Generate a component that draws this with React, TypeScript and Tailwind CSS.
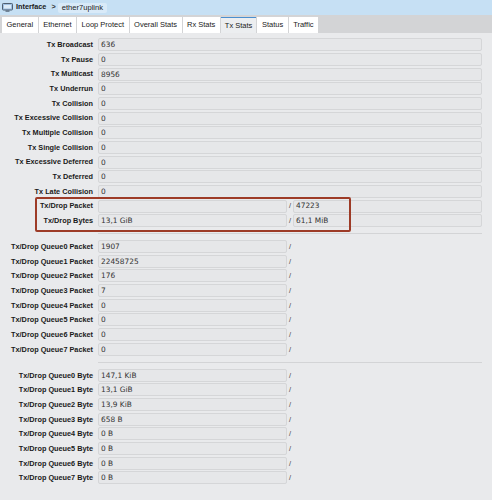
import React from "react";

type RowProps = {
  label: string;
  value?: string;
  second?: string;
  split?: boolean;
};

const tabs = [
  "General",
  "Ethernet",
  "Loop Protect",
  "Overall Stats",
  "Rx Stats",
  "Tx Stats",
  "Status",
  "Traffic",
];

const main: [string, string][] = [
  ["Tx Broadcast", "636"],
  ["Tx Pause", "0"],
  ["Tx Multicast", "8956"],
  ["Tx Underrun", "0"],
  ["Tx Collision", "0"],
  ["Tx Excessive Collision", "0"],
  ["Tx Multiple Collision", "0"],
  ["Tx Single Collision", "0"],
  ["Tx Excessive Deferred", "0"],
  ["Tx Deferred", "0"],
  ["Tx Late Collision", "0"],
];

const queuePackets = ["1907", "22458725", "176", "7", "0", "0", "0", "0"];
const queueBytes = ["147,1 KiB", "13,1 GiB", "13,9 KiB", "658 B", "0 B", "0 B", "0 B", "0 B"];

function Field({ value, className }: { value?: string; className?: string }) {
  return (
    <div
      className={
        "flex h-[13px] items-center rounded-[2px] border border-[#d5d6d8] bg-[#e6e7e9] pl-[2px] font-['DejaVu_Sans',sans-serif] text-[7.4px] text-[#333] " +
        (className ?? "")
      }
    >
      {value}
    </div>
  );
}

function Row({ label, value, second, split }: RowProps) {
  return (
    <div className="mb-[1.67px] flex h-[13px] items-center">
      <div className="w-[93px] shrink-0 text-right text-[7.3px] font-bold leading-none text-[#1a1a1a]">
        {label}
      </div>
      <div className="ml-[5px] flex min-w-0 flex-1 items-center">
        {split ? (
          <>
            <Field value={value} className="w-[189px] shrink-0" />
            <span className="w-[6px] shrink-0 text-center text-[7.4px] text-[#444]">/</span>
            {second !== undefined && <Field value={second} className="flex-1" />}
          </>
        ) : (
          <Field value={value} className="flex-1" />
        )}
      </div>
    </div>
  );
}

function IfaceIcon() {
  return (
    <svg width="11" height="9" viewBox="0 0 11 9" className="shrink-0">
      <rect x="0.5" y="0.5" width="10" height="6.5" rx="0.8" fill="#9fc0e2" stroke="#4f5f70" />
      <rect x="2" y="2" width="7" height="3.5" fill="#dcebf7" />
      <rect x="3.5" y="7.5" width="4" height="1.2" fill="#4f5f70" />
    </svg>
  );
}

export default function App() {
  return (
    <div className="relative h-[500px] w-[492px] overflow-hidden bg-[#e9eaec] font-['Liberation_Sans',Arial,sans-serif] text-[#222]">
      {/* breadcrumb */}
      <div className="flex h-[15px] items-center bg-[#c6e0f4] pl-[2px]">
        <IfaceIcon />
        <span className="ml-[3px] text-[7.3px] font-bold text-[#1a1a1a]">Interface</span>
        <span className="ml-[5px] text-[7.3px] font-bold text-[#333]">&gt;</span>
        <span className="ml-[2px] flex h-[10px] items-center rounded-[2px] bg-[#d9eaf8] px-[4px] text-[7.6px] text-[#222]">
          ether7uplink
        </span>
      </div>

      {/* tabs */}
      <div className="flex h-[18px] items-end gap-[1px] bg-[#d3d4d6] pl-[2px]">
        {tabs.map((t) => (
          <div
            key={t}
            className={
              t === "Tx Stats"
                ? "flex h-[16px] items-center border-t border-[#4a8fd0] bg-[#eceef0] px-[4px] text-[7.5px] text-[#1a1a1a]"
                : "flex h-[16px] items-center bg-white px-[4.5px] text-[7.5px] text-[#1a1a1a]"
            }
          >
            {t}
          </div>
        ))}
      </div>

      <div className="pr-[10px] pt-[5.3px]">
        {main.map(([l, v]) => (
          <Row key={l} label={l} value={v} />
        ))}
        <Row label="Tx/Drop Packet" value="" second="47223" split />
        <Row label="Tx/Drop Bytes" value="13,1 GiB" second="61,1 MiB" split />

        <div className="my-[6px] ml-[98px] h-px bg-[#d3d4d6]" />

        {queuePackets.map((v, i) => (
          <Row key={"p" + i} label={`Tx/Drop Queue${i} Packet`} value={v} split />
        ))}

        <div className="my-[6px] ml-[98px] h-px bg-[#d3d4d6]" />

        {queueBytes.map((v, i) => (
          <Row key={"b" + i} label={`Tx/Drop Queue${i} Byte`} value={v} split />
        ))}
      </div>

      {/* highlight annotation */}
      <div className="pointer-events-none absolute left-[35px] top-[197px] h-[35px] w-[316px] rounded-[2px] border-2 border-[#9d3b27]" />
    </div>
  );
}
